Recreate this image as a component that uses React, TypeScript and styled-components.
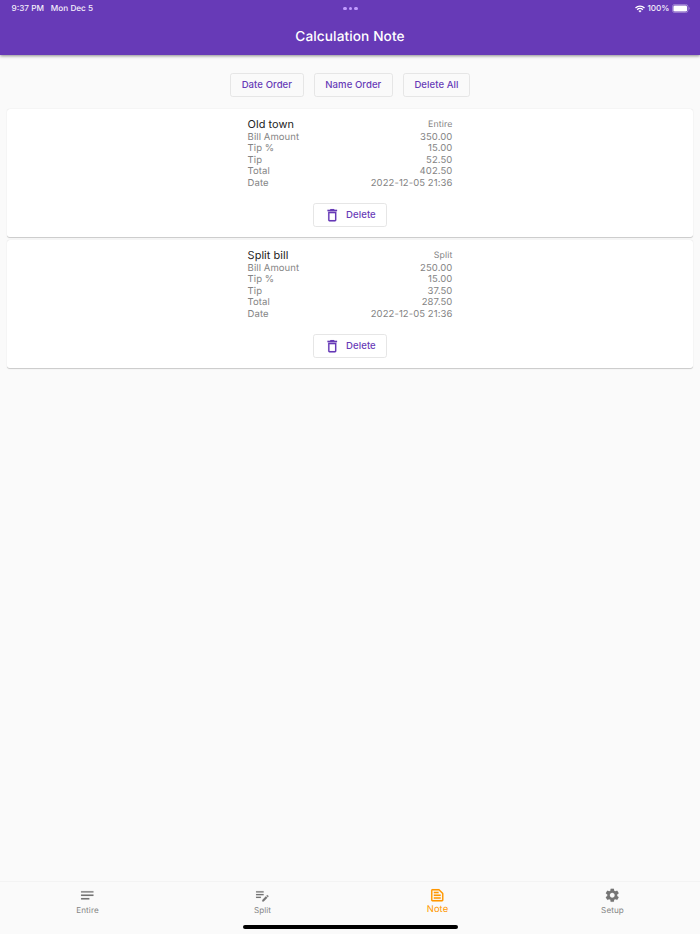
import React from "react";
import styled, { createGlobalStyle } from "styled-components";

const GlobalStyle = createGlobalStyle`
  * { box-sizing: border-box; }
  body { margin: 0; background: #fafafa; }
`;

const Screen = styled.div`
  width: 100%;
  height: 934px;
  display: flex;
  flex-direction: column;
  overflow: hidden;
  background: #fafafa;
  color: #848484;
  font-family: Inter, "Liberation Sans", sans-serif;
  text-rendering: geometricPrecision;
`;

const Header = styled.header`
  height: 55px;
  flex: none;
  background: #673ab7;
  color: #fff;
  box-shadow: 0 1px 3px rgba(0, 0, 0, 0.45);
`;

const StatusBar = styled.div`
  height: 17px;
  padding: 0 10.5px 0 11.5px;
  display: grid;
  grid-template-columns: 1fr auto 1fr;
  align-items: center;
  font-size: 8.2px;
  font-weight: 500;
  line-height: 17px;
  color: #f4effb;
`;

const Clock = styled.div`
  display: flex;
  gap: 7px;
`;

const Dots = styled.div`
  display: flex;
  gap: 2px;
`;

const Dot = styled.span`
  width: 3.5px;
  height: 3.5px;
  border-radius: 50%;
  background: #c39bff;
`;

const Indicators = styled.div`
  display: flex;
  align-items: center;
  justify-content: flex-end;
  gap: 2px;
`;

const Title = styled.h1`
  margin: 0;
  height: 38px;
  text-align: center;
  font-size: 13.67px;
  font-weight: 500;
  line-height: 40px;
  letter-spacing: 0.1px;
`;

const Toolbar = styled.div`
  display: flex;
  justify-content: center;
  gap: 10.4px;
  padding-top: 17.6px;
  height: 53.7px;
  flex: none;
`;

const OutlinedButton = styled.button<{ $width: number }>`
  width: ${(p) => p.$width}px;
  height: 24.8px;
  padding: 0;
  display: flex;
  flex: none;
  align-items: center;
  justify-content: center;
  gap: 5.4px;
  border: 1px solid #e6e6e6;
  border-radius: 2.7px;
  background: transparent;
  color: #673ab7;
  font-family: inherit;
  font-size: 9.57px;
  font-weight: 500;
  line-height: 12px;
  letter-spacing: 0.07px;
  white-space: nowrap;
`;

const CardList = styled.main`
  flex: 1;
  display: flex;
  flex-direction: column;
  gap: 3px;
  padding: 0 7px;
`;

const Card = styled.article`
  height: 128px;
  display: flex;
  flex-direction: column;
  align-items: center;
  padding-top: 9.3px;
  border-radius: 2.7px;
  background: #fff;
  box-shadow: 0 0.7px 1px rgba(0, 0, 0, 0.2);
`;

const Details = styled.div`
  width: 204.8px;
  height: 84.7px;
`;

const Row = styled.div<{ $head?: boolean }>`
  display: flex;
  justify-content: space-between;
  align-items: center;
  height: ${(p) => (p.$head ? 13.6 : 11.62)}px;
  font-size: 9.5px;
  line-height: 11.6px;
  letter-spacing: 0.08px;
`;

const Name = styled.span`
  color: #222;
  font-size: 10.94px;
  letter-spacing: 0.05px;
`;

const Kind = styled.span`
  font-size: 8.8px;
  letter-spacing: 0.1px;
`;

const BottomNav = styled.nav`
  height: 53px;
  flex: none;
  display: grid;
  grid-template-columns: repeat(4, 1fr);
  grid-template-rows: 1fr auto;
  border-top: 1px solid #f3f3f3;
`;

const NavItem = styled.a<{ $active?: boolean }>`
  display: flex;
  flex-direction: column;
  align-items: center;
  padding-top: 5px;
  color: ${(p) => (p.$active ? "#ff9800" : "#757575")};
`;

const NavLabel = styled.span<{ $active?: boolean }>`
  margin-top: ${(p) => (p.$active ? 0.8 : 1.6)}px;
  color: ${(p) => (p.$active ? "#ff9800" : "#858585")};
  font-size: ${(p) => (p.$active ? 9.4 : 8.1)}px;
  line-height: 11px;
  letter-spacing: 0.1px;
`;

const HomeIndicator = styled.div`
  grid-column: 1 / -1;
  justify-self: center;
  width: 215px;
  height: 4px;
  margin-bottom: 5.5px;
  border-radius: 2px;
  background: #000;
`;

const Glyph = styled.svg`
  width: 16.5px;
  height: 16.5px;
  display: block;
  flex: none;
  fill: currentColor;
  stroke: currentColor;
  stroke-width: 0.15px;
`;

const paths = {
  entire: "M3 18h12v-2H3v2zM3 6v2h18V6H3zm0 7h18v-2H3v2z",
  split:
    "M3 10h11v2H3v-2zm0-2h11V6H3v2zm0 8h7v-2H3v2zm15.01-3.13.71-.71c.39-.39 1.02-.39 1.41 0l.71.71c.39.39.39 1.02 0 1.41l-.71.71-2.12-2.12zm-.71.71-5.3 5.3V21h2.12l5.3-5.3-2.12-2.12z",
  note:
    "M14.17 5 19 9.83V19H5V5h9.17m0-2H5c-1.1 0-2 .9-2 2v14c0 1.1.9 2 2 2h14c1.1 0 2-.9 2-2V9.83c0-.53-.21-1.04-.59-1.41l-4.83-4.83c-.37-.38-.88-.59-1.41-.59zM7 15h10v2H7v-2zm0-4h10v2H7v-2zm0-4h7v2H7V7z",
  setup:
    "M19.14 12.94c.04-.3.06-.61.06-.94 0-.32-.02-.64-.07-.94l2.03-1.58c.18-.14.23-.41.12-.61l-1.92-3.32c-.12-.22-.37-.29-.59-.22l-2.39.96c-.5-.38-1.03-.7-1.62-.94l-.36-2.54c-.04-.24-.24-.41-.48-.41h-3.84c-.24 0-.43.17-.47.41l-.36 2.54c-.59.24-1.13.57-1.62.94l-2.39-.96c-.22-.08-.47 0-.59.22L2.74 8.87c-.12.21-.08.47.12.61l2.03 1.58c-.05.3-.09.63-.09.94s.02.64.07.94l-2.03 1.58c-.18.14-.23.41-.12.61l1.92 3.32c.12.22.37.29.59.22l2.39-.96c.5.38 1.03.7 1.62.94l.36 2.54c.05.24.24.41.48.41h3.84c.24 0 .44-.17.47-.41l.36-2.54c.59-.24 1.13-.56 1.62-.94l2.39.96c.22.08.47 0 .59-.22l1.92-3.32c.12-.22.07-.47-.12-.61l-2.01-1.58zM12 15.6c-1.98 0-3.6-1.62-3.6-3.6s1.62-3.6 3.6-3.6 3.6 1.62 3.6 3.6-1.62 3.6-3.6 3.6z",
  trash:
    "M6 19c0 1.1.9 2 2 2h8c1.1 0 2-.9 2-2V7H6v12zM8 9h8v10H8V9zm7.5-5-1-1h-5l-1 1H5v2h14V4h-3.5z",
};

const Icon = ({ name }: { name: keyof typeof paths }) => (
  <Glyph viewBox="0 0 24 24">
    <path d={paths[name]} />
  </Glyph>
);

const WifiIcon = () => (
  <svg width="10" height="8" viewBox="0 0 20 15" fill="none" stroke="#fff" strokeWidth="2.7">
    <path d="M1 5.3C6 .4 14 .4 19 5.3M4.3 8.8c3.2-3.1 8.2-3.1 11.4 0" />
    <path d="M6.9 11.3c1.8-1.6 4.4-1.6 6.2 0L10 14.5z" fill="#fff" stroke="none" />
  </svg>
);

const BatteryIcon = () => (
  <svg width="18" height="9" viewBox="0 0 18 9">
    <rect x="0.4" y="0.4" width="15.6" height="8.2" rx="2.4" fill="none" stroke="#b39ddb" strokeWidth="0.7" />
    <rect x="1.4" y="1.4" width="13.6" height="6.2" rx="1.4" fill="#fff" />
    <path d="M16.8 3.1c1 .4 1 2.4 0 2.8z" fill="#b39ddb" />
  </svg>
);

const notes = [
  {
    name: "Old town",
    kind: "Entire",
    rows: [["Bill Amount", "350.00"], ["Tip %", "15.00"], ["Tip", "52.50"], ["Total", "402.50"], ["Date", "2022-12-05 21:36"]],
  },
  {
    name: "Split bill",
    kind: "Split",
    rows: [["Bill Amount", "250.00"], ["Tip %", "15.00"], ["Tip", "37.50"], ["Total", "287.50"], ["Date", "2022-12-05 21:36"]],
  },
];

const tabs: { icon: keyof typeof paths; label: string; active?: boolean }[] = [
  { icon: "entire", label: "Entire" },
  { icon: "split", label: "Split" },
  { icon: "note", label: "Note", active: true },
  { icon: "setup", label: "Setup" },
];

export default function App() {
  return (
    <Screen>
      <GlobalStyle />
      <Header>
        <StatusBar>
          <Clock>
            <span>9:37 PM</span>
            <span>Mon Dec 5</span>
          </Clock>
          <Dots>
            <Dot />
            <Dot />
            <Dot />
          </Dots>
          <Indicators>
            <WifiIcon />
            <span>100%</span>
            <BatteryIcon />
          </Indicators>
        </StatusBar>
        <Title>Calculation Note</Title>
      </Header>
      <Toolbar>
        <OutlinedButton $width={73.7}>Date Order</OutlinedButton>
        <OutlinedButton $width={78.5}>Name Order</OutlinedButton>
        <OutlinedButton $width={67}>Delete All</OutlinedButton>
      </Toolbar>
      <CardList>
        {notes.map((note) => (
          <Card key={note.name}>
            <Details>
              <Row $head>
                <Name>{note.name}</Name>
                <Kind>{note.kind}</Kind>
              </Row>
              {note.rows.map(([label, value]) => (
                <Row key={label}>
                  <span>{label}</span>
                  <span>{value}</span>
                </Row>
              ))}
            </Details>
            <OutlinedButton $width={74}>
              <Icon name="trash" />
              Delete
            </OutlinedButton>
          </Card>
        ))}
      </CardList>
      <BottomNav>
        {tabs.map((tab) => (
          <NavItem key={tab.label} $active={tab.active}>
            <Icon name={tab.icon} />
            <NavLabel $active={tab.active}>{tab.label}</NavLabel>
          </NavItem>
        ))}
        <HomeIndicator />
      </BottomNav>
    </Screen>
  );
}
